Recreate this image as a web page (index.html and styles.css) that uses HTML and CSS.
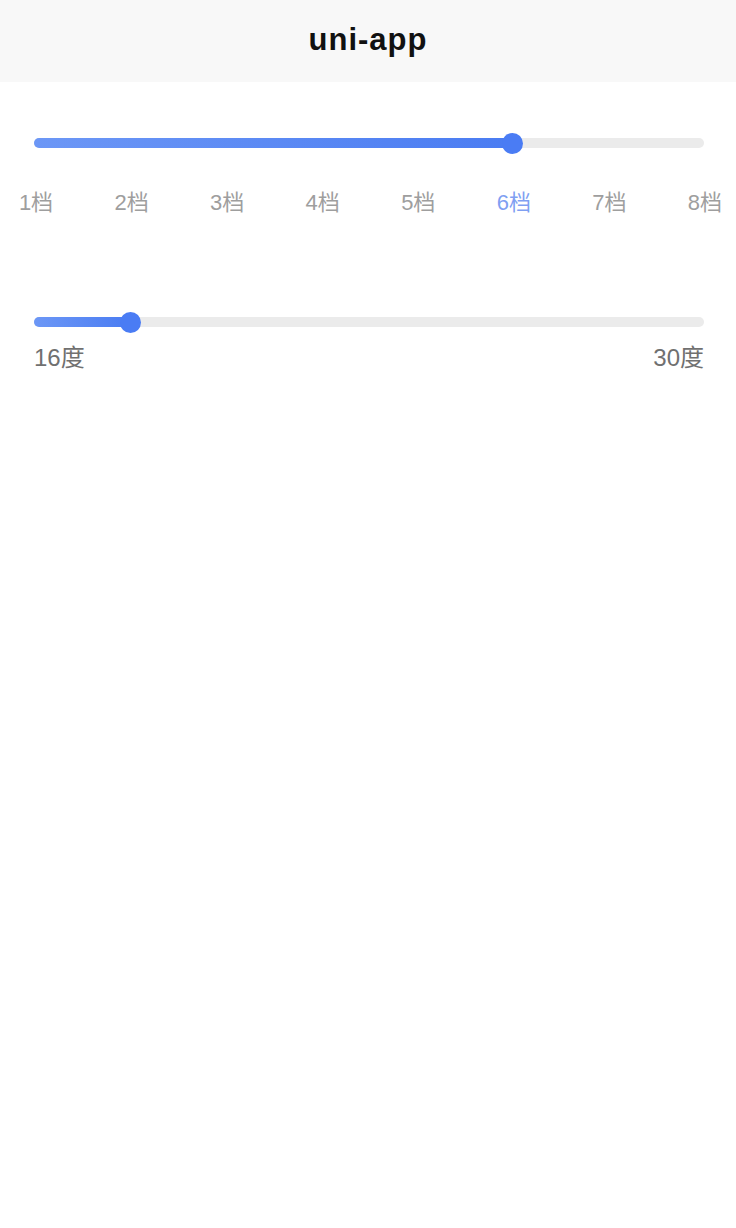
FILE: index.html
```html
<!DOCTYPE html>
<html lang="zh-CN">
<head>
<meta charset="utf-8">
<title>uni-app</title>
<link rel="stylesheet" href="styles.css">
</head>
<body>
<header class="nav">
  <h1 class="nav-title">uni-app</h1>
</header>
<main class="content">
  <section class="block block-gear">
    <div class="slider">
      <div class="track">
        <div class="fill" style="width: 71.4%"></div>
        <div class="thumb" style="left: 71.4%"></div>
      </div>
    </div>
    <div class="ticks">
      <span class="tick">1档</span>
      <span class="tick">2档</span>
      <span class="tick">3档</span>
      <span class="tick">4档</span>
      <span class="tick">5档</span>
      <span class="tick tick-active">6档</span>
      <span class="tick">7档</span>
      <span class="tick">8档</span>
    </div>
  </section>
  <section class="block block-temp">
    <div class="slider">
      <div class="track">
        <div class="fill" style="width: 14.3%"></div>
        <div class="thumb" style="left: 14.3%"></div>
      </div>
    </div>
    <div class="range">
      <span class="range-label">16度</span>
      <span class="range-label">30度</span>
    </div>
  </section>
</main>
</body>
</html>
```

FILE: styles.css
```css
html, body {
  margin: 0;
  padding: 0;
  background: #ffffff;
}
body {
  font-family: "Liberation Sans", "Noto Sans CJK SC", sans-serif;
  width: 736px;
  min-height: 1228px;
}
.nav {
  height: 82px;
  background: #f8f8f8;
  display: flex;
  align-items: center;
  justify-content: center;
}
.nav-title {
  margin: 0;
  font-size: 31px;
  font-weight: 700;
  color: #111111;
  letter-spacing: 1px;
  line-height: 1;
  padding-bottom: 4px;
}
.content {
  display: flex;
  flex-direction: column;
}
.slider {
  padding: 0 32px 0 34px;
}
.track {
  position: relative;
  height: 10px;
  border-radius: 5px;
  background: #ebebeb;
}
.fill {
  height: 10px;
  border-radius: 5px 0 0 5px;
  background: linear-gradient(to right, #6c97f6, #4a7cf2);
}
.thumb {
  position: absolute;
  top: -5px;
  width: 21px;
  height: 21px;
  margin-left: -10px;
  border-radius: 50%;
  background: #4a7cf4;
}
.block-gear {
  padding-top: 56px;
}
.ticks {
  display: flex;
  justify-content: space-between;
  padding: 0 11px 0 16px;
  margin-top: 44px;
}
.tick {
  width: 40px;
  text-align: center;
  font-size: 22px;
  line-height: 22px;
  color: #9e9e9e;
}
.tick-active {
  color: #7f9ff2;
}
.block-temp {
  padding-top: 103px;
}
.range {
  display: flex;
  justify-content: space-between;
  padding: 0 32px 0 34px;
  margin-top: 18px;
}
.range-label {
  font-size: 24px;
  line-height: 26px;
  color: #707070;
}
```
